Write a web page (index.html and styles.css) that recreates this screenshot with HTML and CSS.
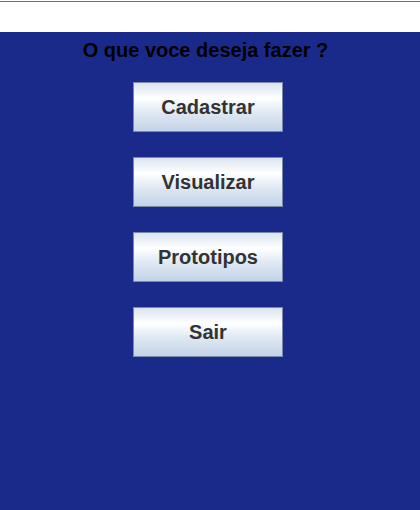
FILE: index.html
```html
<!DOCTYPE html>
<html>
<head>
<meta charset="utf-8">
<link rel="stylesheet" href="styles.css">
</head>
<body>
<div class="topbar"></div>
<main class="panel">
  <h1 class="title">O que voce deseja fazer ?</h1>
  <div class="menu">
    <button class="btn">Cadastrar</button>
    <button class="btn">Visualizar</button>
    <button class="btn">Prototipos</button>
    <button class="btn">Sair</button>
  </div>
</main>
</body>
</html>
```

FILE: styles.css
```css
html, body {
  margin: 0;
  padding: 0;
  height: 100%;
}
body {
  display: flex;
  flex-direction: column;
  font-family: "Liberation Sans", Arial, sans-serif;
  background: #ffffff;
}
.topbar {
  height: 31px;
  margin-top: 1px;
  border-top: 1px solid #6e6e6e;
  box-sizing: border-box;
  background: #ffffff;
  flex: none;
}
.panel {
  flex: 1;
  background: #1a2a8a;
  display: flex;
  flex-direction: column;
  align-items: center;
  padding: 7px 4px 0 0;
}
.title {
  margin: 0;
  font-size: 20px;
  font-weight: bold;
  line-height: 23px;
  color: #000000;
  padding-right: 5px;
}
.menu {
  margin-top: 20px;
  display: flex;
  flex-direction: column;
  gap: 25px;
}
.btn {
  width: 150px;
  height: 50px;
  box-sizing: border-box;
  border: 1px solid #7a8aa6;
  border-radius: 0;
  padding: 0;
  background: linear-gradient(to bottom, #dbe4f0 0%, #ffffff 32%, #dfe8f3 62%, #c3d3e7 100%);
  font-family: "Liberation Sans", Arial, sans-serif;
  font-size: 20px;
  font-weight: bold;
  color: #333333;
}
```
